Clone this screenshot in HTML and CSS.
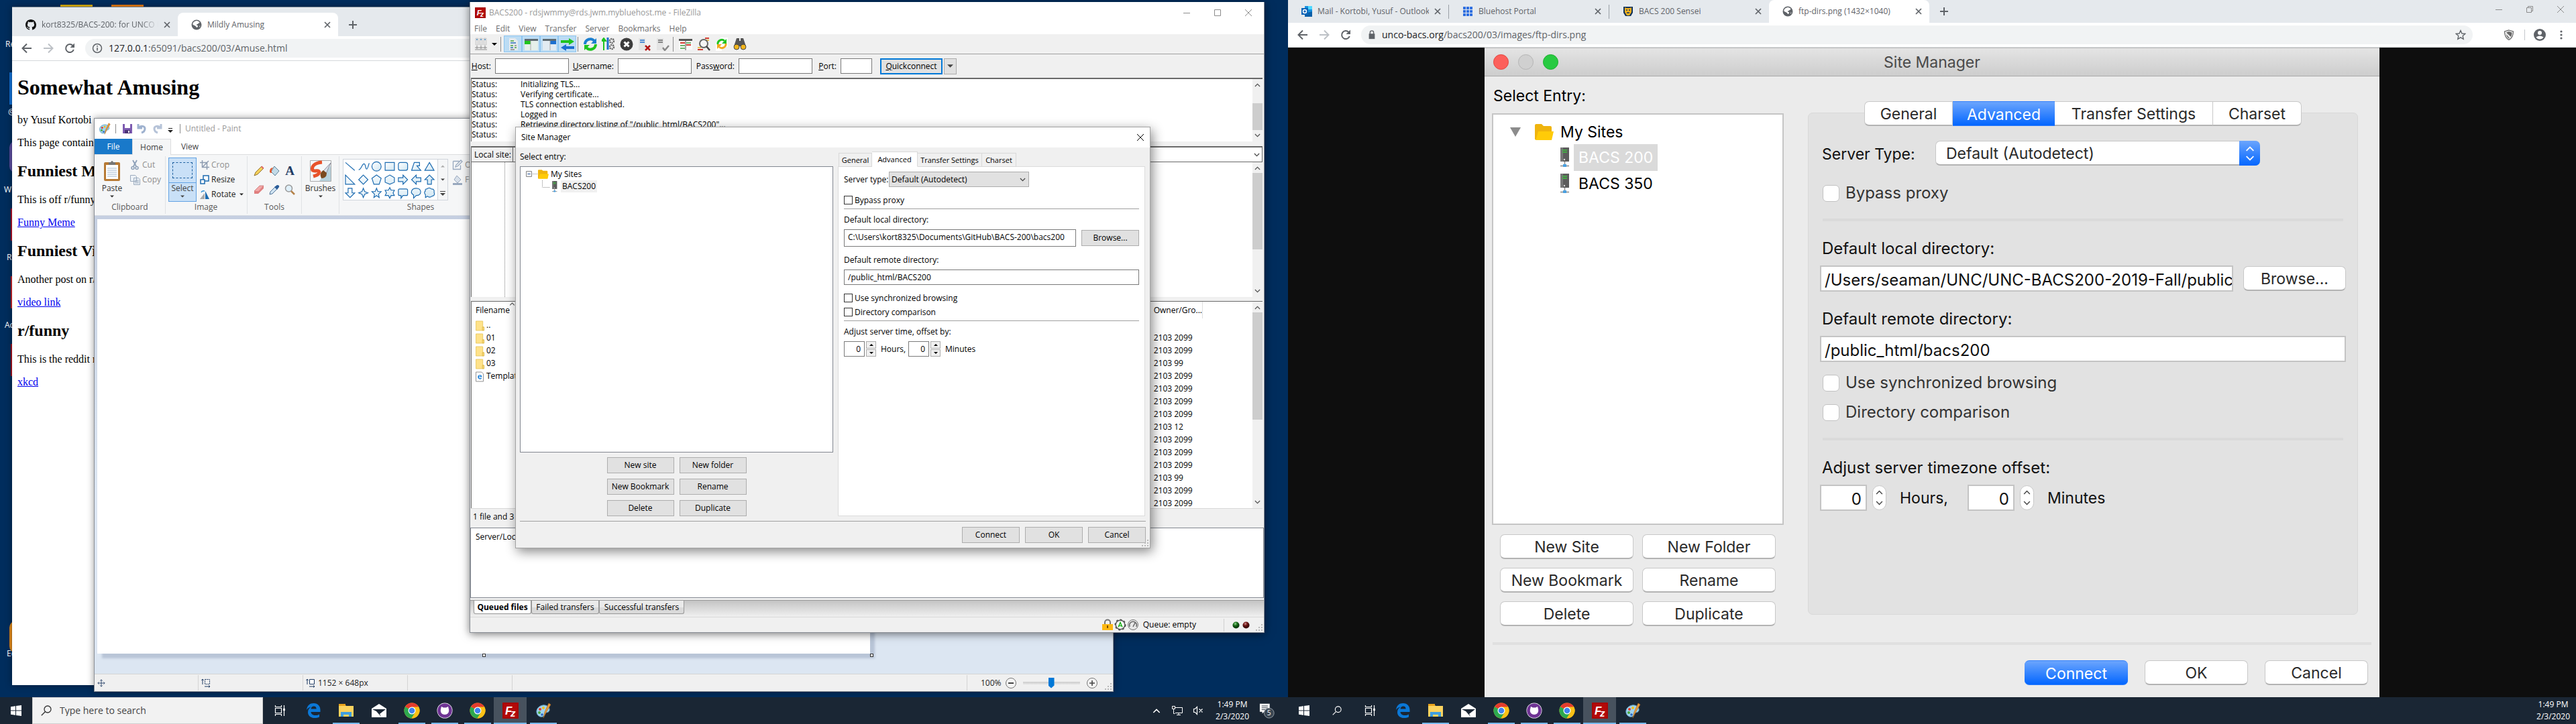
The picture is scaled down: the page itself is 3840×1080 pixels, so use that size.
FILE: index.html
```html
<!DOCTYPE html>
<html lang="en">
<head>
<meta charset="utf-8">
<title>Desktop</title>
<link rel="stylesheet" href="styles.css">
</head>
<body>
<svg class="sprite" aria-hidden="true">
  <defs>
    <linearGradient id="shapeFill" x1="0" y1="0" x2="1" y2="1"><stop offset="0" stop-color="#fff"/><stop offset="1" stop-color="#cfe6f2"/></linearGradient>
    <radialGradient id="ledGreen" cx=".4" cy=".3"><stop offset="0" stop-color="#9fd49a"/><stop offset=".5" stop-color="#1f7a1f"/><stop offset="1" stop-color="#0b3d0b"/></radialGradient>
    <radialGradient id="ledRed" cx=".4" cy=".3"><stop offset="0" stop-color="#c99"/><stop offset=".5" stop-color="#7a1a1a"/><stop offset="1" stop-color="#3d0b0b"/></radialGradient>
  </defs>
  <symbol id="close" viewBox="0 0 10 10"><path d="M1 1l8 8M9 1l-8 8" stroke="currentColor" stroke-width="1.7" fill="none"/></symbol>
  <symbol id="winclose" viewBox="0 0 12 12"><path d="M1 1l10 10M11 1L1 11" stroke="currentColor" fill="none"/></symbol>
  <symbol id="winmin" viewBox="0 0 12 12"><path d="M1 6.5h10" stroke="currentColor"/></symbol>
  <symbol id="winmax" viewBox="0 0 12 12"><path d="M1.5 1.5h9v9h-9z" stroke="currentColor" fill="none"/></symbol>
  <symbol id="winrestore" viewBox="0 0 12 12"><path d="M1.500 3.500h7v7h-7zM3.500 3.500v-2h7v7h-2" stroke="currentColor" fill="none"/></symbol>
  <symbol id="plus" viewBox="0 0 12 12"><path d="M6 0v12M0 6h12" stroke="currentColor" stroke-width="2"/></symbol>
  <symbol id="back" viewBox="0 0 16 16"><path d="M15 8H2M8 1.500L1.500 8 8 14.500" stroke="currentColor" stroke-width="2" fill="none"/></symbol>
  <symbol id="fwd" viewBox="0 0 16 16"><path d="M1 8h13M8 1.500L14.500 8 8 14.500" stroke="currentColor" stroke-width="2" fill="none"/></symbol>
  <symbol id="reload" viewBox="0 0 16 16"><path d="M13.800 10A6 6 0 1 1 12.500 4" stroke="currentColor" stroke-width="2" fill="none"/><path d="M15 .5V7H8.500z" fill="currentColor"/></symbol>
  <symbol id="info" viewBox="0 0 16 16"><circle cx="8" cy="8" r="6.500" fill="none" stroke="currentColor" stroke-width="1.500"/><path d="M8 7v4.500M8 4v1.800" stroke="currentColor" stroke-width="1.600"/></symbol>
  <symbol id="padlock" viewBox="0 0 12 16"><path d="M1 6h10v9H1z" fill="currentColor"/><path d="M3 7V4a3 3 0 0 1 6 0v3" fill="none" stroke="currentColor" stroke-width="1.600"/></symbol>
  <symbol id="globe" viewBox="0 0 16 16"><circle cx="8" cy="8" r="7.500" fill="#5f6368"/><path d="M7 2.200c2-.6 4.500.6 5.600 2.300-.5 1.500-2 .8-2.500 2-.3 1-2.200.5-2.300 1.600.1 1 1.700.6 2.200 1.500.3 1-.6 1.600-1 2.500-1.500-.4-1.700-2-3-2.700C4.500 8.700 2.800 8.500 2.300 7.200 2.400 4.500 5 2.500 7 2.200zM12.500 9.500l1.200.2-1.500 2.300z" fill="#fff"/></symbol>
  <symbol id="github" viewBox="0 0 16 16"><path fill="#111" d="M8 0C3.580 0 0 3.580 0 8c0 3.540 2.290 6.530 5.470 7.590.4.070.55-.17.55-.38 0-.19-.01-.82-.01-1.490-2.010.37-2.530-.49-2.690-.94-.09-.23-.48-.94-.82-1.130-.28-.15-.68-.52-.01-.53.63-.01 1.080.58 1.230.82.72 1.210 1.870.87 2.330.66.070-.52.28-.87.510-1.070-1.780-.2-3.640-.89-3.640-3.950 0-.87.310-1.590.82-2.150-.08-.2-.36-1.020.08-2.120 0 0 .67-.21 2.200.82a7.600 7.600 0 0 1 4 0c1.530-1.040 2.200-.82 2.200-.82.44 1.100.16 1.920.08 2.120.51.56.82 1.270.82 2.150 0 3.070-1.870 3.750-3.650 3.950.29.25.54.73.54 1.480 0 1.070-.01 1.930-.01 2.200 0 .21.15.46.55.38A8 8 0 0 0 16 8c0-4.420-3.580-8-8-8z"/></symbol>
  <symbol id="chev-d" viewBox="0 0 10 6"><path d="M1 .8l4 4 4-4" stroke="currentColor" stroke-width="1.300" fill="none"/></symbol>
  <symbol id="chev-u" viewBox="0 0 10 6"><path d="M1 5.200l4-4 4 4" stroke="currentColor" stroke-width="1.300" fill="none"/></symbol>
  <symbol id="tri-d" viewBox="0 0 8 4"><path d="M0 0h8L4 4z" fill="currentColor"/></symbol>
  <symbol id="tri-u" viewBox="0 0 8 4"><path d="M0 4h8L4 0z" fill="currentColor"/></symbol>
  <symbol id="palette" viewBox="0 0 24 24"><path d="M11 4C5 5 1 10 2 15c1 5 5 7 9 6 3-1 2-3 3-5 2-2 5 0 7-4 1-5-4-9-10-8z" fill="#9fd3ee" stroke="#5b9cbd"/><circle cx="7" cy="10" r="2" fill="#e23b2e"/><circle cx="12" cy="8" r="2" fill="#f2c21a"/><circle cx="6" cy="15" r="2" fill="#4aa83d"/><circle cx="10" cy="18" r="1.800" fill="#2b66c2"/><path d="M20 1l3 2-7 12-4 8 2-9z" fill="#e59a3c" stroke="#a9631b" stroke-width=".6"/></symbol>
  <symbol id="fz" viewBox="0 0 24 24"><path d="M0 0h24v24H0z" fill="#b30909"/><path d="M1 1h22v22H1z" fill="none" stroke="#7d0505" stroke-dasharray="1 1"/><text x="4" y="18" font-family="Liberation Sans" font-weight="700" font-style="italic" font-size="17" fill="#fff">F</text><text x="12" y="21" font-family="Liberation Sans" font-weight="700" font-style="italic" font-size="15" fill="#fff">z</text></symbol>
  <symbol id="chrome" viewBox="0 0 24 24"><circle cx="12" cy="12" r="11.500" fill="#fbc116"/><path d="M12 12L2 6.300A11.500 11.500 0 0 1 22 6.300z" fill="#e33b2e"/><path d="M12 12L2 6.300A11.500 11.500 0 0 0 11.500 23.500L17 14.800z" fill="#2da94f"/><path d="M12 6.500h10.100A11.500 11.500 0 0 1 11.500 23.500L17 14.800z" fill="#fbc116"/><circle cx="12" cy="12" r="5.500" fill="#fff"/><circle cx="12" cy="12" r="4.300" fill="#3f83f0"/></symbol>
  <symbol id="ghdesk" viewBox="0 0 24 24"><circle cx="12" cy="12" r="11.500" fill="#fff"/><circle cx="12" cy="12" r="10.800" fill="#6f3494"/><path d="M7 6l3 1.500h4L17 6l1 4c1 5-2 8-6 8s-7-3-6-8z" fill="#fff"/></symbol>
  <symbol id="edge" viewBox="0 0 24 24"><path fill="#0b78d7" d="M2 11C3 4 7 1 12.500 1 19 1 22.500 5.500 22.500 11v3H8.500c.3 3.500 3 5 6.500 5 2.300 0 4.500-.6 6-1.600v4.200c-2 1-4.300 1.500-7 1.500C7.500 23 4 19 4 14.500 4 10.500 6 7.800 9 6.500 6 7 3.500 8.500 2 11zm6.600-1.500h8c0-2.500-1.300-4-3.800-4-2.300 0-3.800 1.500-4.200 4z"/></symbol>
  <symbol id="explorer" viewBox="0 0 24 24"><path d="M1 3h9l2 2h11v16H1z" fill="#fbd35f"/><path d="M1 2h10v3H1z" fill="#e8a21b"/><path d="M4 14h16v7h-4v-3H8v3H4z" fill="#3f9fe0"/></symbol>
  <symbol id="mail" viewBox="0 0 24 24"><path d="M1 9l11-7 11 7v13H1z" fill="#fff"/><path d="M2 10h20l-9 7 2 4-7-8z" fill="#1a2634"/></symbol>
  <symbol id="taskview" viewBox="0 0 18 18"><path d="M2.500 5.500h9v7h-9zM2.500 1v2.500h9V1M2.500 17v-2.500h9V17" stroke="#fff" fill="none" stroke-width="1.200"/><path d="M15.500 1v16" stroke="#fff" stroke-width="1.200"/><path d="M14 6h3v3h-3z" fill="#fff"/></symbol>
  <symbol id="winlogo" viewBox="0 0 16 16"><path fill="#fff" d="M0 2.300L7 1.300v6.200H0zM8 1.100L16 0v7.500H8zM0 8.500h7v6.200L0 13.700zM8 8.500h8V16L8 14.900z"/></symbol>
  <symbol id="search" viewBox="0 0 16 16"><circle cx="10" cy="6" r="5" fill="none" stroke="currentColor" stroke-width="1.300"/><path d="M6.500 9.500L.8 15.300" stroke="currentColor" stroke-width="1.300"/></symbol>
  <symbol id="folder" viewBox="0 0 28 24"><path d="M0 2q0-2 2-2h8l3 3h10q2 0 2 2v18H0z" fill="#efb40e"/><path d="M5 11h23l-3 13H0q2 0 3-6z" fill="#ffcb08"/></symbol>
  <symbol id="server" viewBox="0 0 16 30"><path d="M1 0h13v21H1z" fill="#5c5c5c"/><path d="M1 0h4v21H1z" fill="#777"/><path d="M4 4h7M4 7h7" stroke="#3fbf3f" stroke-width="1.600"/><circle cx="7" cy="18" r="1.200" fill="#ddd"/><path d="M7.500 21v6M1 27.500h13" stroke="#888" stroke-width="1.500"/><path d="M5 25h5v4H5z" fill="#4aa0e0"/></symbol>
  <symbol id="minifolder" viewBox="0 0 14 16"><path d="M.5.5h11v15H.5z" fill="#ffe28a" stroke="#e8c860"/><path d="M11 10h2.500v5.500H11z" fill="#ffe28a" stroke="#d9b23a"/></symbol>
  <symbol id="htmlfile" viewBox="0 0 14 16"><path d="M.5.500h9l3 3v12H.5z" fill="#fff" stroke="#888"/><path d="M3.500 8q.5-3 3.500-3 3 0 3 3.500H5q.3 2 2.300 2 1.200 0 2.200-.5v1.300Q8 12 7 12 3.500 11.500 3.500 8zm1.700-.6h3Q8 6 6.800 6T5.200 7.400z" fill="#0b78d7"/></symbol>
  <symbol id="movex" viewBox="0 0 14 14"><path d="M7 1v12M1 7h12M5 3l2-2 2 2M5 11l2 2 2-2M3 5L1 7l2 2M11 5l2 2-2 2" stroke="#1f3b63" fill="none"/></symbol>
  <symbol id="selsize" viewBox="0 0 14 14"><path d="M5.500 1.500h7v7h-7z" stroke="#1f3b63" fill="none" stroke-dasharray="2 1"/><path d="M2 9V1M.5 3L2 1l1.500 2M5 12h8M11 10.500l2 1.500-2 1.500" stroke="#1f3b63" fill="none"/></symbol>
  <symbol id="imgsize" viewBox="0 0 14 14"><path d="M5.500 1.500h7v7h-7z" stroke="#1f3b63" fill="#fff"/><path d="M2 9V1M.5 3L2 1l1.500 2M5 12h8M11 10.500l2 1.500-2 1.500" stroke="#1f3b63" fill="none"/></symbol>
  <symbol id="grip" viewBox="0 0 10 10"><path d="M8 0h2v2H8zM4 4h2v2H4zM8 4h2v2H8zM0 8h2v2H0zM4 8h2v2H4zM8 8h2v2H8z" fill="#b8b8b8"/></symbol>
</svg>

<div class="screens">

<!-- Left monitor -->
<section class="monitor">
  <div class="desktop">
    <ul class="desk-labels">
      <li class="lab-a">Re</li><li class="lab-b">@</li><li class="lab-c">W</li><li class="lab-d">R</li><li class="lab-e">Ac</li><li class="lab-f">Ec</li>
    </ul>
    <i class="tile tile-gold"></i><i class="tile tile-orange"></i>
    <i class="tile tile-blue"></i><i class="tile tile-purple"></i><i class="tile tile-red1"></i><i class="tile tile-red2"></i><i class="tile tile-red3"></i><i class="tile tile-ball"></i>

    <!-- Browser -->
    <article class="window browser left-browser">
      <div class="tabstrip raised">
        <div class="tab"><svg class="i16"><use href="#github"/></svg><span class="tab-title fade">kort8325/BACS-200: for UNCO BACS</span><button class="tabx" aria-label="Close tab"><svg class="i10"><use href="#close"/></svg></button></div>
        <div class="tab active"><svg class="i16"><use href="#globe"/></svg><span class="tab-title">Mildly Amusing</span><button class="tabx" aria-label="Close tab"><svg class="i10"><use href="#close"/></svg></button></div>
        <button class="newtab" aria-label="New tab"><svg class="i12"><use href="#plus"/></svg></button>
      </div>
      <div class="navbar">
        <button aria-label="Back"><svg class="i16"><use href="#back"/></svg></button>
        <button class="off" aria-label="Forward"><svg class="i16"><use href="#fwd"/></svg></button>
        <button aria-label="Reload"><svg class="i16"><use href="#reload"/></svg></button>
        <div class="omni"><svg class="i16"><use href="#info"/></svg><span><b>127.0.0.1</b>:65091/bacs200/03/Amuse.html</span></div>
      </div>
      <main class="page">
        <h1>Somewhat Amusing</h1>
        <p>by Yusuf Kortobi</p>
        <p>This page contains</p>
        <h2>Funniest Meme</h2>
        <p>This is off r/funny</p>
        <p><a href="#meme">Funny Meme</a></p>
        <h2>Funniest Video</h2>
        <p>Another post on r/</p>
        <p><a href="#video">video link</a></p>
        <h2>r/funny</h2>
        <p>This is the reddit r</p>
        <p><a href="#xkcd">xkcd</a></p>
      </main>
    </article>

    <!-- Paint -->
    <article class="window paint">
      <header class="paint-title">
        <svg class="i18"><use href="#palette"/></svg><i class="vbar"></i>
        <svg class="i16 save" viewBox="0 0 16 16"><path d="M1 1h14v14H1z" fill="#7d5bb0"/><path d="M4 1h8v6H4z" fill="#fff"/><path d="M4 10h8v5H4z" fill="#4a3375"/><path d="M9 11h2v3H9z" fill="#fff"/></svg>
        <svg class="i16 undo" viewBox="0 0 16 16"><path d="M2 1v6h6M3 6c4-3 9-2 9 2 0 3-2 5-5 6" fill="none" stroke="#9fb2cf" stroke-width="3"/></svg>
        <svg class="i16" viewBox="0 0 16 16"><path d="M14 1v6H8M13 6C9 3 4 4 4 8c0 3 2 5 5 6" fill="none" stroke="#b6c3d8" stroke-width="3"/></svg>
        <svg class="qat" viewBox="0 0 8 8"><path d="M1 1.500h6" stroke="#222"/><path d="M0 4h8L4 8z" fill="#222"/></svg><i class="vbar"></i>
        <span>Untitled - Paint</span>
      </header>
      <nav class="paint-tabs"><button class="file">File</button><button class="home">Home</button><button class="view">View</button></nav>
      <div class="ribbon">
        <section class="group g-clip">
          <div class="group-body">
            <button class="big"><svg class="paste-ico" viewBox="0 0 26 32"><rect x="1" y="3" width="24" height="28" rx="2" fill="#b77a35"/><path d="M4 7h18v21H4z" fill="#fff"/><path d="M6 12h14M6 15h14M6 18h14M6 21h14M6 24h14" stroke="#9fb6cf"/><path d="M8 3h3q2-4 4 0h3v4H8z" fill="#777"/></svg><span>Paste</span><svg class="tri"><use href="#tri-d"/></svg></button>
            <div class="smalls two">
              <button class="dim"><svg class="i16" viewBox="0 0 16 16"><path d="M5 1l5 9M11 1L6 10" stroke="#8da0b8" stroke-width="1.800"/><circle cx="5" cy="12.500" r="2" fill="none" stroke="#8da0b8" stroke-width="1.500"/><circle cx="11" cy="12.500" r="2" fill="none" stroke="#8da0b8" stroke-width="1.500"/></svg>Cut</button>
              <button class="dim"><svg class="i16" viewBox="0 0 16 16"><path d="M1.500 1.500h7l2 2v7h-9zM6.500 5.500h7l2 2v8h-9z" fill="#eef3f8" stroke="#9aaabd"/><path d="M8 9h6M8 11h6M8 13h6" stroke="#9aaabd"/></svg>Copy</button>
            </div>
          </div>
          <h3>Clipboard</h3>
        </section>
        <section class="group g-image">
          <div class="group-body">
            <button class="select-btn"><span class="sel-top"><i></i></span><span class="sel-bot">Select<svg class="tri"><use href="#tri-d"/></svg></span></button>
            <div class="smalls">
              <button class="dim"><svg class="i14" viewBox="0 0 14 14"><path d="M3.500 0v10.500H14M0 3.500h10.500V14M4 10l9-9" fill="none" stroke="#8d9bb0" stroke-width="1.500"/></svg>Crop</button>
              <button><svg class="i14" viewBox="0 0 14 14"><path d="M5 1h8v8H5z" fill="#fff" stroke="#1c6bb0" stroke-width="1.500"/><path d="M1 7h6v6H1z" fill="#fff" stroke="#1c6bb0" stroke-width="1.500"/></svg>Resize</button>
              <button><svg class="i14" viewBox="0 0 14 14"><path d="M0 14h7V5z" fill="#aaa"/><path d="M8 14h6L8 2z" fill="#1c6bb0"/><path d="M2 4q1-3 5-2" fill="none" stroke="#2d8fd8" stroke-width="1.300"/></svg>Rotate<svg class="tri"><use href="#tri-d"/></svg></button>
            </div>
          </div>
          <h3>Image</h3>
        </section>
        <section class="group g-tools">
          <div class="tool-grid">
            <button aria-label="Pencil"><svg viewBox="0 0 16 16"><path d="M1 15l2-5L12 1l3 3-9 9z" fill="#f3cf5a" stroke="#7b5a17" stroke-width=".8"/><path d="M11 2l3 3 1.500-1.500-3-3z" fill="#e06a6a"/></svg></button>
            <button aria-label="Fill"><svg viewBox="0 0 16 16"><path d="M8 1l7 7-6 7-6-6z" fill="#c3dbe8" stroke="#5e8197"/><path d="M1 9q0-6 5-6-3 3-2 8-3 0-3-2z" fill="#e2572b"/></svg></button>
            <button class="letter" aria-label="Text">A</button>
            <button aria-label="Eraser"><svg viewBox="0 0 16 16"><path d="M1 10l8-8h6l-8 9z" fill="#f3a9a9" stroke="#c06a6a" stroke-width=".7"/><path d="M1 10h6v4H1zM7 11l8-9v4l-8 8z" fill="#e07f7f"/></svg></button>
            <button aria-label="Color picker"><svg viewBox="0 0 16 16"><path d="M1 15l1-4 7-7 3 3-7 7z" fill="#cfe3f2" stroke="#54779a"/><path d="M8 4l4 4 3-4q1-3-3-3z" fill="#2a5d99"/></svg></button>
            <button aria-label="Magnifier"><svg viewBox="0 0 16 16"><circle cx="6.500" cy="6" r="5" fill="#dff0fa" stroke="#999" stroke-width="1.500"/><path d="M10 10l5 5" stroke="#b5834a" stroke-width="2.500"/></svg></button>
          </div>
          <h3>Tools</h3>
        </section>
        <section class="group g-brush">
          <button class="big"><svg class="brush-ico" viewBox="0 0 32 32"><path d="M.5.5h31v31H.5z" fill="#f4f8fa" stroke="#aaa"/><path d="M31 31V8L14 31z" fill="#b7d2dc"/><path d="M18 3C6 4 2 10 4 15c4 3 9-2 10 3-1 4-5 5-9 6" fill="none" stroke="#e8532b" stroke-width="5"/><path d="M31 4L20 16l4 4z" fill="#d9e3ea" stroke="#889"/><path d="M20 15q-7 4-3 12 8 0 8-8z" fill="#7a4a1e"/></svg><span>Brushes</span><svg class="tri"><use href="#tri-d"/></svg></button>
        </section>
        <section class="group g-shapes">
          <div class="group-body">
            <svg class="gallery" viewBox="0 0 142 60" fill="url(#shapeFill)" stroke="#1c6bb0" stroke-width="1.200">
              <path d="M3 4l14 12" /><path d="M23 15c4 0 5-9 8-9s2 8 4 8 3-8 4-9" fill="none"/><circle cx="50" cy="10" r="7"/><path d="M63 4h14v12H63z"/><rect x="83" y="4" width="14" height="12" rx="3"/><path d="M103 16l4-12h8v5h-4l6 7z"/><path d="M130 4l7 12h-14z"/>
              <path d="M3 23v14h14zM30 23l7 7-7 7-7-7zM50 23l7 5-3 9h-8l-3-9zM70 23l7 4v7l-7 3-7-3v-7zM83 27h7v-4l7 7-7 7v-4h-7zM117 27h-7v-4l-7 7 7 7v-4h7zM127 37v-7h-4l7-7 7 7h-4v7z"/>
              <path d="M7 43v7H3l7 7 7-7h-4v-7zM30 43l2 5 5 2-5 2-2 5-2-5-5-2 5-2zM50 43l2 5h5l-4 4 1 5-4-3-4 3 1-5-4-4h5zM70 42l2 4h5l-2 4 2 4h-5l-2 4-2-4h-5l2-4-2-4h5zM85 44h10q2 0 2 2v6q0 2-2 2h-5l-3 4v-4h-2q-2 0-2-2v-6q0-2 2-2zM110 43c9 0 9 11 0 11l-4 4v-5c-6-3-3-10 4-10zM126 44q4-3 7 0 5 0 4 5 2 5-3 6-4 3-7 0l-3 2v-4q-3-4 0-6-1-3 2-3z"/>
            </svg>
            <div class="gal-scroll"><span class="dim"><svg class="tri"><use href="#tri-u"/></svg></span><span><svg class="tri"><use href="#tri-d"/></svg></span><span class="more"><svg class="tri"><use href="#tri-d"/></svg></span></div>
            <div class="smalls two">
              <button class="dim"><svg class="i16" viewBox="0 0 16 16"><path d="M1.500 2.500h9M1.500 2.500v12h11v-6M5 11l1-3 7-7 2 2-7 7z" fill="none" stroke="#98a8be" stroke-width="1.300"/></svg>Outline</button>
              <button class="dim"><svg class="i16" viewBox="0 0 16 16"><path d="M7 2l6 6-5 5-5-5z" fill="#d8e0ea" stroke="#98a8be"/><path d="M1 13h14v3H1z" fill="#98a8be"/></svg>Fill</button>
            </div>
          </div>
          <h3>Shapes</h3>
        </section>
      </div>
      <div class="workspace"><div class="canvas"><i class="handle hb"></i><i class="handle hc"></i></div></div>
      <footer class="paint-status">
        <span><svg class="i12"><use href="#movex"/></svg></span><span><svg class="i14"><use href="#selsize"/></svg></span><span><svg class="i14"><use href="#imgsize"/></svg>1152 × 648px</span><span></span><span class="grow"></span>
        <div class="zoomer"><label for="pzoom">100%</label>
          <svg class="i18" viewBox="0 0 18 18"><circle cx="9" cy="9" r="7.500" fill="#f4f4f4" stroke="#777"/><path d="M5 9h8" stroke="#444" stroke-width="2"/></svg>
          <input id="pzoom" type="range" value="50">
          <svg class="i18" viewBox="0 0 18 18"><circle cx="9" cy="9" r="7.500" fill="#f4f4f4" stroke="#777"/><path d="M5 9h8M9 5v8" stroke="#444" stroke-width="1.600"/></svg></div>
        <svg class="grip"><use href="#grip"/></svg>
      </footer>
    </article>

    <!-- FileZilla -->
    <article class="window filezilla">
      <header class="fz-title"><svg class="i16"><use href="#fz"/></svg><span>BACS200 - rdsjwmmy@rds.jwm.mybluehost.me - FileZilla</span>
        <div class="winbtns"><button aria-label="Minimize"><svg class="i12"><use href="#winmin"/></svg></button><button aria-label="Maximize"><svg class="i12"><use href="#winmax"/></svg></button><button aria-label="Close"><svg class="i12"><use href="#winclose"/></svg></button></div></header>
      <nav class="fz-menu"><span>File</span><span>Edit</span><span>View</span><span>Transfer</span><span>Server</span><span>Bookmarks</span><span>Help</span></nav>
      <div class="fz-tools">
        <button aria-label="Site Manager"><svg viewBox="0 0 20 20"><path d="M2 1h4v10H2zM8 1h4v10H8zM14 1h4v10h-4z" fill="#e3e3e3" stroke="#bbb" stroke-width=".6"/><path d="M3 3h2M9 3h2M15 3h2" stroke="#4a90c8" stroke-width="1.500"/><path d="M4 12v5M10 12v5M16 12v5M1 18h18M1 15h18" stroke="#888"/></svg></button>
        <button class="narrow" aria-label="Sites"><svg class="tri"><use href="#tri-d"/></svg></button><i class="vbar"></i>
        <button class="on" aria-label="Message log"><svg viewBox="0 0 20 20"><path d="M4 1h9l4 4v14H4z" fill="#e6eaec"/><path d="M6 5h5M6 12h4M12 15h3" stroke="#4aa83d" stroke-width="1.500"/><path d="M6 8h8M6 15h4" stroke="#2b6fb5" stroke-width="1.500"/><path d="M12 12h3M6 18h6" stroke="#888" stroke-width="1.500"/></svg></button>
        <button class="on" aria-label="Local tree"><svg viewBox="0 0 20 20"><path d="M0 3h20v16H0z" fill="#e6f0ea"/><path d="M0 2h20v3H0z" fill="#5e6a70"/><path d="M0 5h9v5H0z" fill="#1fc41f"/><path d="M9 5v14" stroke="#aaa"/></svg></button>
        <button class="on" aria-label="Remote tree"><svg viewBox="0 0 20 20"><path d="M0 3h20v16H0z" fill="#e2ebf2"/><path d="M0 2h20v3H0z" fill="#5e6a70"/><path d="M11 5h9v5h-9z" fill="#1c6fd0"/><path d="M11 5v14" stroke="#aaa"/></svg></button>
        <button class="on" aria-label="Transfer queue"><svg viewBox="0 0 20 20"><path d="M0 4h12V1l8 5-8 5V8H0z" fill="#1fc41f"/><path d="M20 13H8v-3l-8 5 8 5v-3h12z" fill="#1c6fd0"/></svg></button><i class="vbar"></i>
        <button aria-label="Refresh"><svg viewBox="0 0 20 20"><path d="M2 10a8 8 0 0 1 14-5" fill="none" stroke="#1c7fd0" stroke-width="4"/><path d="M19 1v8h-8z" fill="#1c7fd0"/><path d="M18 10a8 8 0 0 1-14 5" fill="none" stroke="#1fc41f" stroke-width="4"/><path d="M1 19v-8h8z" fill="#1fc41f"/></svg></button>
        <button aria-label="Filter"><svg viewBox="0 0 20 20"><path d="M3 4v15M0 5l3-4 3 4z" stroke="#1fc41f" fill="#1fc41f" stroke-width="2"/><path d="M9 0v18" stroke="#1c6fd0" stroke-width="3"/><circle cx="15" cy="5" r="3" fill="none" stroke="#666" stroke-width="2.500" stroke-dasharray="2 1"/><circle cx="15" cy="14" r="3" fill="none" stroke="#666" stroke-width="2.500" stroke-dasharray="2 1"/></svg></button>
        <button aria-label="Cancel"><svg viewBox="0 0 20 20"><circle cx="10" cy="10" r="9.500" fill="#3c3c3c"/><path d="M6.500 6.500l7 7M13.500 6.500l-7 7" stroke="#fff" stroke-width="3"/></svg></button>
        <button aria-label="Disconnect"><svg viewBox="0 0 20 20"><path d="M1 1h10v18H1z" fill="#e4e4e4"/><path d="M3 4h7M3 7h7" stroke="#1c6fd0" stroke-width="1.500"/><path d="M11 12l7 7M18 12l-7 7" stroke="#b31414" stroke-width="2.500"/></svg></button>
        <button aria-label="Reconnect"><svg viewBox="0 0 20 20"><path d="M1 1h10v18H1z" fill="#e4e4e4"/><path d="M3 4h7M3 7h7" stroke="#666" stroke-width="1.500"/><path d="M10 15l3 4 6-7" fill="none" stroke="#888" stroke-width="2.500"/></svg></button><i class="vbar"></i>
        <button aria-label="Compare"><svg viewBox="0 0 20 20"><path d="M0 2h20v16H0z" fill="#fafafa"/><path d="M0 3.500h20" stroke="#555" stroke-width="3"/><path d="M2 8h7M11 11h7" stroke="#d43b2e" stroke-width="2"/><path d="M2 12h7M11 8h7M2 16h7" stroke="#3f9f3f" stroke-width="1.500"/><path d="M10 3v16" stroke="#555"/></svg></button>
        <button aria-label="Search"><svg viewBox="0 0 20 20"><path d="M12 1h6M1 18h8" stroke="#d43b2e" stroke-width="2"/><path d="M13 4h5M1 15h5" stroke="#e8b21b" stroke-width="1.500"/><circle cx="10" cy="9" r="6" fill="#f4f4f4" stroke="#666" stroke-width="2"/><path d="M14 13l5 6" stroke="#444" stroke-width="2.500"/></svg></button>
        <button aria-label="Synchronize"><svg viewBox="0 0 20 20"><path d="M8 0h11v14H8zM1 8h9v12H1z" fill="#fff"/><path d="M4 10a6 6 0 0 1 10-5" fill="none" stroke="#1fc41f" stroke-width="3"/><path d="M17 2v7h-7z" fill="#1fc41f"/><path d="M16 9a6 6 0 0 1-10 5" fill="none" stroke="#f0a81b" stroke-width="3"/><path d="M3 17v-7h7z" fill="#f0a81b"/></svg></button>
        <button aria-label="Find"><svg viewBox="0 0 20 20"><path d="M5 1h4v4h2V1h4l4 12H1z" fill="#555"/><circle cx="5" cy="14" r="4" fill="#f3b51b" stroke="#444"/><circle cx="15" cy="14" r="4" fill="#f3b51b" stroke="#444"/></svg></button>
      </div>
      <form class="quick">
        <label for="qh"><u>H</u>ost:</label><input id="qh" type="text">
        <label for="qu"><u>U</u>sername:</label><input id="qu" type="text">
        <label for="qp">Pass<u>w</u>ord:</label><input id="qp" type="password">
        <label for="qo"><u>P</u>ort:</label><input id="qo" type="text">
        <button type="button" class="go"><u>Q</u>uickconnect</button><button type="button" class="drop" aria-label="History"><svg class="tri"><use href="#tri-d"/></svg></button>
      </form>
      <div class="log">
        <table><tbody><tr><th>Status:</th><td>Initializing TLS...</td></tr><tr><th>Status:</th><td>Verifying certificate...</td></tr><tr><th>Status:</th><td>TLS connection established.</td></tr><tr><th>Status:</th><td>Logged in</td></tr><tr><th>Status:</th><td>Retrieving directory listing of "/public_html/BACS200"...</td></tr><tr><th>Status:</th><td></td></tr></tbody></table>
        <div class="sb"><svg><use href="#chev-u"/></svg><div class="track t-log"><i></i></div><svg><use href="#chev-d"/></svg></div>
      </div>
      <div class="panes trees">
        <section><div class="sitebar"><label for="lsite">Local site:</label><input id="lsite" type="text"></div><div class="treebody"><i class="dots"></i></div></section>
        <section><div class="sitebar combo"><input type="text" aria-label="Remote site"><svg class="cdrop"><use href="#chev-d"/></svg></div><div class="treebody"><div class="sb end"><svg><use href="#chev-u"/></svg><div class="track t-tree"><i></i></div><svg><use href="#chev-d"/></svg></div></div></section>
      </div>
      <div class="panes lists">
        <section>
          <div class="listbody"><table class="files"><thead><tr><th>Filename</th></tr></thead><tbody>
          <tr><td><svg><use href="#minifolder"/></svg>..</td></tr><tr><td><svg><use href="#minifolder"/></svg>01</td></tr><tr><td><svg><use href="#minifolder"/></svg>02</td></tr><tr><td><svg><use href="#minifolder"/></svg>03</td></tr><tr><td><svg><use href="#htmlfile"/></svg>Template</td></tr></tbody></table>
          <svg class="sortcaret"><use href="#chev-u"/></svg></div>
          <p class="liststat">1 file and 3 directories</p>
        </section>
        <section>
          <div class="listbody right"><table class="files owner"><thead><tr><th>Owner/Gro...</th></tr></thead><tbody>
          <tr><td></td></tr><tr><td>2103 2099</td></tr><tr><td>2103 2099</td></tr><tr><td>2103 99</td></tr><tr><td>2103 2099</td></tr><tr><td>2103 2099</td></tr><tr><td>2103 2099</td></tr><tr><td>2103 2099</td></tr><tr><td>2103 12</td></tr><tr><td>2103 2099</td></tr><tr><td>2103 2099</td></tr><tr><td>2103 2099</td></tr><tr><td>2103 99</td></tr><tr><td>2103 2099</td></tr><tr><td>2103 2099</td></tr></tbody></table>
          <div class="sb"><svg><use href="#chev-u"/></svg><div class="track t-list"><i></i></div><svg><use href="#chev-d"/></svg></div></div>
          <p class="liststat"></p>
        </section>
      </div>
      <div class="queue">Server/Local file</div>
      <nav class="qtabs"><button class="cur">Queued files</button><button>Failed transfers</button><button>Successful transfers</button></nav>
      <footer class="fz-status">
        <svg class="i18" viewBox="0 0 18 18"><path d="M5 9V5.500a4 4 0 0 1 8 0V9" fill="none" stroke="#777" stroke-width="2"/><path d="M1 8h16v9H1z" fill="#fdb813"/><path d="M9 10v4" stroke="#7a4d00" stroke-width="2"/></svg>
        <svg class="i18" viewBox="0 0 18 18"><circle cx="9" cy="9" r="6.800" fill="#fff" stroke="#555" stroke-width="1.500"/><circle cx="9" cy="9" r="7.800" fill="none" stroke="#555" stroke-width="1.500" stroke-dasharray="3 3"/><path d="M6 12.500l3-7 3 7M7 10.500h4" stroke="#1fae1f" stroke-width="1.500" fill="none"/></svg>
        <svg class="i18" viewBox="0 0 18 18"><circle cx="9" cy="9" r="7.500" fill="#e8e8e8" stroke="#777"/><path d="M4 12a5.500 5.500 0 1 1 10 0M9 12l3-6" fill="none" stroke="#666" stroke-width="1.500"/></svg>
        <span>Queue: empty</span><i class="vbar"></i>
        <svg class="led" viewBox="0 0 12 12"><circle cx="6" cy="6" r="5.500" fill="url(#ledGreen)"/></svg><svg class="led" viewBox="0 0 12 12"><circle cx="6" cy="6" r="5.500" fill="url(#ledRed)"/></svg>
        <svg class="grip"><use href="#grip"/></svg>
      </footer>
    </article>

    <!-- Site Manager dialog -->
    <article class="window dialog">
      <header class="dlg-title"><span>Site Manager</span><button aria-label="Close"><svg class="i12"><use href="#winclose"/></svg></button></header>
      <div class="dlg-body">
        <section class="dlg-left">
          <h2>Select entry:</h2>
          <ul class="tree"><li><svg class="expander" viewBox="0 0 18 10"><path d="M.5.500h8v8h-8z" fill="#f4f4f4" stroke="#888"/><path d="M2.500 4.500h4" stroke="#2b5ea8"/><path d="M10 4.500h8" stroke="#888" stroke-dasharray="1 1"/></svg><svg class="fold"><use href="#folder"/></svg>My Sites</li>
          <li class="child"><svg class="branch" viewBox="0 0 12 18"><path d="M.5 0v10.500H12" fill="none" stroke="#888" stroke-dasharray="1 1"/></svg><svg class="srv"><use href="#server"/></svg><span>BACS200</span></li></ul>
          <div class="btngrid"><button>New site</button><button>New folder</button><button>New Bookmark</button><button>Rename</button><button>Delete</button><button>Duplicate</button></div>
        </section>
        <section class="dlg-right">
          <nav class="dlg-tabs"><button class="t1">General</button><button class="t2 cur">Advanced</button><button class="t3">Transfer Settings</button><button class="t4">Charset</button></nav>
          <form class="dlg-panel">
            <div class="row"><label for="st">Server type:</label><div class="selwrap"><select id="st"><option>Default (Autodetect)</option></select><svg><use href="#chev-d"/></svg></div></div>
            <label class="check first"><input type="checkbox">Bypass proxy</label>
            <hr>
            <label class="lbl" for="ld">Default local directory:</label>
            <div class="row dir"><input id="ld" type="text" value="C:\Users\kort8325\Documents\GitHub\BACS-200\bacs200"><button type="button">Browse...</button></div>
            <label class="lbl second" for="rd">Default remote directory:</label>
            <input id="rd" class="full" type="text" value="/public_html/BACS200">
            <label class="check sync"><input type="checkbox">Use synchronized browsing</label>
            <label class="check cmp"><input type="checkbox">Directory comparison</label>
            <hr>
            <span class="lbl">Adjust server time, offset by:</span>
            <div class="row spin"><input id="hh" type="text" value="0"><span class="updown"><i><svg><use href="#tri-u"/></svg></i><i><svg><use href="#tri-d"/></svg></i></span><label for="hh">Hours,</label><input id="mm" type="text" value="0"><span class="updown"><i><svg><use href="#tri-u"/></svg></i><i><svg><use href="#tri-d"/></svg></i></span><label for="mm">Minutes</label></div>
          </form>
        </section>
      </div>
      <footer class="dlg-foot"><button>Connect</button><button>OK</button><button>Cancel</button></footer>
      <svg class="grip"><use href="#grip"/></svg>
    </article>
  </div>

  <footer class="taskbar">
    <button class="start" aria-label="Start"><svg class="i16"><use href="#winlogo"/></svg></button>
    <label class="searchbox"><svg class="i16"><use href="#search"/></svg><input type="text" placeholder="Type here to search" aria-label="Search"></label>
    <button class="app" aria-label="Task view"><svg class="i18"><use href="#taskview"/></svg></button>
    <button class="app" aria-label="Edge"><svg><use href="#edge"/></svg></button>
    <button class="app run" aria-label="File Explorer"><svg><use href="#explorer"/></svg></button>
    <button class="app" aria-label="Mail"><svg><use href="#mail"/></svg></button>
    <button class="app run" aria-label="Chrome"><svg><use href="#chrome"/></svg></button>
    <button class="app run" aria-label="GitHub Desktop"><svg><use href="#ghdesk"/></svg></button>
    <button class="app run" aria-label="Chrome"><svg><use href="#chrome"/></svg></button>
    <button class="app run cur" aria-label="FileZilla"><svg><use href="#fz"/></svg></button>
    <button class="app run" aria-label="Paint"><svg><use href="#palette"/></svg></button>
    <div class="tray">
      <svg class="tchev"><use href="#chev-u"/></svg>
      <svg class="i16" viewBox="0 0 16 16"><path d="M5 3.500h10.500v8H5M10 11.500v3M7 14.500h6M.5 1.500h4v4h-4zM2.500 5.500v7h2" fill="none" stroke="#fff"/></svg>
      <svg class="i16" viewBox="0 0 16 16"><path d="M1.500 5.500h2l3-3v11l-3-3h-2zM9.500 5.500l5 5M14.500 5.500l-5 5" fill="none" stroke="#fff" stroke-width="1.200"/></svg>
      <time>1:49 PM<br>2/3/2020</time>
      <svg class="notif" viewBox="0 0 26 26"><path d="M1 2h16v13H8l-3 3v-3H1z" fill="#fff"/><path d="M4 5.500h10M4 8.500h10M4 11.500h6" stroke="#1a2634"/><circle cx="16" cy="17" r="8" fill="#3a4652" stroke="#9aa3ab"/><text x="16" y="21" text-anchor="middle" font-family="Open Sans" font-size="11" fill="#fff">5</text></svg>
    </div>
  </footer>
</section>

<!-- Right monitor -->
<section class="monitor">
  <article class="browser maximized">
    <div class="tabstrip">
      <div class="tab"><svg class="i16" viewBox="0 0 16 16"><path d="M5 0h11v16H5z" fill="#1490df"/><path d="M10 0h6v5h-6z" fill="#50d9ff"/><path d="M5 11l11-3v8H5z" fill="#0a5fa8"/><path d="M0 3h10v10H0z" fill="#0a64b8"/><circle cx="5" cy="8" r="2.500" fill="none" stroke="#fff" stroke-width="1.500"/></svg><span class="tab-title">Mail - Kortobi, Yusuf - Outlook</span><button class="tabx" aria-label="Close tab"><svg class="i10"><use href="#close"/></svg></button></div>
      <div class="tab line"><svg class="i16" viewBox="0 0 16 16"><path d="M1 1h4v4H1zM6 1h4v4H6zM11 1h4v4h-4zM1 6h4v4H1zM6 6h4v4H6zM11 6h4v4h-4zM1 11h4v4H1zM6 11h4v4H6zM11 11h4v4h-4z" fill="#2f6fe0"/></svg><span class="tab-title">Bluehost Portal</span><button class="tabx" aria-label="Close tab"><svg class="i10"><use href="#close"/></svg></button></div>
      <div class="tab line"><svg class="i16" viewBox="0 0 16 16"><path d="M1 1h14v9l-3 5H4l-3-5z" fill="#12335c"/><path d="M3 2l2 1h6l2-1v7l-3 5H6L3 9z" fill="#f2b01e"/><path d="M5 6h2M9 6h2M6 10h4" stroke="#12335c" stroke-width="1.500"/></svg><span class="tab-title">BACS 200 Sensei</span><button class="tabx" aria-label="Close tab"><svg class="i10"><use href="#close"/></svg></button></div>
      <div class="tab active"><svg class="i16"><use href="#globe"/></svg><span class="tab-title">ftp-dirs.png (1432×1040)</span><button class="tabx" aria-label="Close tab"><svg class="i10"><use href="#close"/></svg></button></div>
      <button class="newtab" aria-label="New tab"><svg class="i12"><use href="#plus"/></svg></button>
      <div class="winbtns"><button aria-label="Minimize"><svg class="i12"><use href="#winmin"/></svg></button><button aria-label="Restore"><svg class="i12"><use href="#winrestore"/></svg></button><button aria-label="Close"><svg class="i12"><use href="#winclose"/></svg></button></div>
    </div>
    <div class="navbar">
      <button aria-label="Back"><svg class="i16"><use href="#back"/></svg></button>
      <button class="off" aria-label="Forward"><svg class="i16"><use href="#fwd"/></svg></button>
      <button aria-label="Reload"><svg class="i16"><use href="#reload"/></svg></button>
      <div class="omni"><svg class="lockico"><use href="#padlock"/></svg><span><b>unco-bacs.org</b>/bacs200/03/images/ftp-dirs.png</span>
        <svg class="i16 star" viewBox="0 0 16 16"><path d="M8 1.500l2 4.500 4.800.4-3.600 3.200 1 4.800L8 11.900l-4.200 2.500 1-4.800L1.200 6.400 6 6z" fill="none" stroke="#5f6368" stroke-width="1.400"/></svg></div>
      <svg class="i16 shield" viewBox="0 0 16 16"><path d="M8 1l6.500 2C14.500 9 12.500 13 8 15.500 3.500 13 1.500 9 1.500 3z" fill="#eee" stroke="#666" stroke-width="1.200"/><path d="M8 3l4.500 1.500Q12.500 9 11 11L4 4.500zM4 7l5 6-1 .5Q4.500 11 4 7z" fill="#666"/></svg>
      <i class="vbar"></i>
      <svg class="i18 avatar" viewBox="0 0 18 18"><circle cx="9" cy="9" r="9" fill="#5f6368"/><circle cx="9" cy="6" r="3" fill="#fff"/><path d="M3.500 12.500q5.500-4 11 0Q12.500 15.500 9 15.500t-5.500-3z" fill="#fff"/></svg>
      <svg class="i16" viewBox="0 0 16 16"><circle cx="8" cy="3" r="1.600" fill="#5f6368"/><circle cx="8" cy="8" r="1.600" fill="#5f6368"/><circle cx="8" cy="13" r="1.600" fill="#5f6368"/></svg>
    </div>
    <div class="viewer">
      <div class="mac">
        <header class="mac-title"><span class="lights"><i class="red"></i><i class="grey"></i><i class="green"></i></span><h2>Site Manager</h2></header>
        <div class="mac-body">
          <section class="mac-left">
            <h3>Select Entry:</h3>
            <ul class="mac-tree"><li class="root"><svg class="mtri" viewBox="0 0 16 14"><path d="M0 0h16L8 14z" fill="#8c8c8c"/></svg><svg class="mfold"><use href="#folder"/></svg>My Sites</li>
            <li><svg class="msrv"><use href="#server"/></svg><span class="cur">BACS 200</span></li><li><svg class="msrv"><use href="#server"/></svg><span>BACS 350</span></li></ul>
            <div class="mac-grid"><button>New Site</button><button>New Folder</button><button>New Bookmark</button><button>Rename</button><button>Delete</button><button>Duplicate</button></div>
          </section>
          <section class="mac-right">
            <nav class="mac-tabs"><button class="m1">General</button><button class="m2 cur">Advanced</button><button class="m3">Transfer Settings</button><button class="m4">Charset</button></nav>
            <form class="mac-panel">
              <div class="mrow type"><label for="mst">Server Type:</label><div class="msel"><select id="mst"><option>Default (Autodetect)</option></select><span class="knob"><svg><use href="#chev-u"/></svg><svg><use href="#chev-d"/></svg></span></div></div>
              <label class="mcheck c1"><input type="checkbox">Bypass proxy</label>
              <hr>
              <label class="mlbl" for="mld">Default local directory:</label>
              <div class="mrow mdir"><input id="mld" type="text" value="/Users/seaman/UNC/UNC-BACS200-2019-Fall/public_html"><button type="button">Browse...</button></div>
              <label class="mlbl" for="mrd">Default remote directory:</label>
              <input id="mrd" class="mfull" type="text" value="/public_html/bacs200">
              <label class="mcheck c2"><input type="checkbox">Use synchronized browsing</label>
              <label class="mcheck c3"><input type="checkbox">Directory comparison</label>
              <hr>
              <span class="mlbl">Adjust server timezone offset:</span>
              <div class="mrow mspin"><input id="mh" type="text" value="0"><span class="stepper"><svg><use href="#chev-u"/></svg><svg><use href="#chev-d"/></svg></span><label for="mh">Hours,</label><input id="mm2" type="text" value="0"><span class="stepper"><svg><use href="#chev-u"/></svg><svg><use href="#chev-d"/></svg></span><label for="mm2">Minutes</label></div>
            </form>
          </section>
        </div>
        <footer class="mac-foot"><button class="primary">Connect</button><button>OK</button><button>Cancel</button></footer>
      </div>
    </div>
  </article>
  <footer class="taskbar">
    <button class="start" aria-label="Start"><svg class="i16"><use href="#winlogo"/></svg></button>
    <button class="app" aria-label="Search"><svg class="i16"><use href="#search"/></svg></button>
    <button class="app" aria-label="Task view"><svg class="i18"><use href="#taskview"/></svg></button>
    <button class="app" aria-label="Edge"><svg><use href="#edge"/></svg></button>
    <button class="app run" aria-label="File Explorer"><svg><use href="#explorer"/></svg></button>
    <button class="app" aria-label="Mail"><svg><use href="#mail"/></svg></button>
    <button class="app run" aria-label="Chrome"><svg><use href="#chrome"/></svg></button>
    <button class="app run" aria-label="GitHub Desktop"><svg><use href="#ghdesk"/></svg></button>
    <button class="app run" aria-label="Chrome"><svg><use href="#chrome"/></svg></button>
    <button class="app run cur" aria-label="FileZilla"><svg><use href="#fz"/></svg></button>
    <button class="app run" aria-label="Paint"><svg><use href="#palette"/></svg></button>
    <div class="tray slim"><time>1:49 PM<br>2/3/2020</time></div>
  </footer>
</section>
</div>
</body>
</html>
```
FILE: styles.css
```css
* { box-sizing: border-box; }
html, body { margin: 0; height: 100%; }
body { font: 12px/16px "Open Sans", "Noto Sans", sans-serif; color: #000; overflow: hidden; }
h1, h2, h3, p, ul { margin: 0; padding: 0; font-size: inherit; font-weight: 400; }
ul { list-style: none; }
button, input, select { font: inherit; color: inherit; margin: 0; padding: 0; border: 0; border-radius: 0; background: none; outline: 0; }
button { display: flex; align-items: center; justify-content: center; white-space: nowrap; }
table { border-collapse: collapse; }
th, td { padding: 0; text-align: left; font-weight: 400; white-space: nowrap; }
svg { display: block; flex: none; }
label, span { white-space: nowrap; }
.sprite { position: absolute; width: 0; height: 0; }
.i10 { width: 10px; height: 10px; }
.i12 { width: 12px; height: 12px; }
.i14 { width: 14px; height: 14px; }
.i16 { width: 16px; height: 16px; }
.i18 { width: 18px; height: 18px; }
.tri { width: 6px; height: 4px; }
.vbar { width: 1px; background: #8c8c8c; }

.screens { display: grid; grid-template-columns: 1fr 1fr; height: 100%; }
.monitor { display: flex; flex-direction: column; min-width: 0; min-height: 0; }
.desktop { position: relative; flex: 1; background: #002d5d; overflow: hidden; }
.window { position: absolute; display: flex; flex-direction: column; overflow: hidden; }

/* desktop items that peek out beside the windows */
.desk-labels { color: #fff; }
.desk-labels li, .tile { position: absolute; }
.lab-a { left: 8px; top: 58px; }
.lab-b { left: 12px; top: 159px; }
.lab-c { left: 6px; top: 275px; }
.lab-d { left: 10px; top: 376px; }
.lab-e { left: 7px; top: 477px; }
.lab-f { left: 10px; top: 967px; }
.tile { left: 14px; width: 20px; height: 48px; }
.tile-gold { left: 90px; top: 7px; width: 48px; background: #e6b70c; }
.tile-orange { left: 166px; top: 7px; width: 48px; background: #f07f13; }
.tile-blue { top: 108px; background: #1271d6; }
.tile-purple { top: 210px; background: #5b4da0; border-radius: 20px; }
.tile-red1 { left: 16px; top: 311px; background: #b3122a; }
.tile-red2 { left: 16px; top: 412px; background: #c8242c; }
.tile-red3 { left: 16px; top: 513px; background: #a5121f; }
.tile-ball { top: 926px; background: #e08a1c; border-radius: 20px; }

/* browser */
.browser { background: #fff; }
.left-browser { left: 18px; top: 10px; right: 700px; bottom: 18px; border-top: 1px solid #7d8a96; box-shadow: 0 0 10px #0006; }
.maximized { flex: 1; display: flex; flex-direction: column; min-height: 0; }
.tabstrip { display: flex; height: 34px; background: #e5e9ed; color: #5f6368; flex: none; }
.tabstrip.raised { height: 43px; padding-top: 8px; }
.tab { width: 239px; padding: 0 11px 0 20px; display: flex; align-items: center; gap: 8px; position: relative; }
.tab.active { background: #fff; border-radius: 8px 8px 0 0; }
.raised .tab:first-child { width: 247px; }
.tab-title { flex: 1; min-width: 0; overflow: hidden; }
.fade { -webkit-mask-image: linear-gradient(90deg, #000 85%, transparent); mask-image: linear-gradient(90deg, #000 85%, transparent); }
.tab.line { border-left: 1px solid #9aa0a6; border-image: linear-gradient(transparent 22%, #9aa0a6 22%, #9aa0a6 80%, transparent 80%) 1; }
.newtab { width: 44px; }
.winbtns { margin-left: auto; display: flex; color: #8c8c8c; }
.winbtns button { width: 46px; }
.maximized .winbtns { height: 28px; }
.navbar { display: flex; align-items: center; height: 37px; padding-left: 6px; border-bottom: 1px solid #d5d8db; color: #5f6368; flex: none; }
.navbar > button { width: 32px; height: 32px; }
.navbar .off { color: #bdc1c6; }
.omni { display: flex; align-items: center; gap: 9px; flex: 1; height: 28px; margin-left: 7px; padding: 0 10px; border-radius: 14px; background: #f1f3f4; font-size: 14px; }
.omni b { font-weight: 400; color: #202124; }
.lockico { width: 12px; height: 14px; }
.star { margin-left: auto; }
.shield { margin-left: 46px; }
.navbar .vbar { height: 16px; margin: 0 13px 0 15px; background: #c4c8cc; }
.navbar .avatar { margin-right: 15px; }
.navbar .avatar + svg { margin-right: 14px; }
.page { padding: 0 8px; font: 16px/18px "Liberation Serif", serif; white-space: nowrap; }
.page h1 { margin: 21px 0; font-size: 32px; line-height: 37px; font-weight: 700; }
.page h2 { margin: 20px 0; font-size: 24px; line-height: 27px; font-weight: 700; }
.page p { margin: 16px 0; }
.page a { color: #0000ee; }

/* paint */
.paint { left: 140px; top: 176px; right: 260px; bottom: 8px; background: #f0f0f0; border: 1px solid #8a8f96; box-shadow: 0 0 10px #0006; color: #444; }
.paint-title { height: 30px; flex: none; background: #fff; display: flex; align-items: center; padding-left: 6px; color: #999; }
.paint-title .vbar { height: 14px; margin: 0 9px 0 7px; }
.save, .undo { margin-right: 6px; }
.qat { width: 8px; height: 8px; margin: 4px 3px 0 8px; }
.paint-title .qat + .vbar { margin: 0 7px; }
.paint-tabs { display: flex; height: 24px; flex: none; background: linear-gradient(#fff 23px, #dcdddf 23px); }
.paint-tabs .file { width: 56px; height: 23px; background: #1979ca; color: #fff; }
.paint-tabs .home { width: 58px; background: #f5f6f7; border: 1px solid #dcdddf; border-bottom: 0; }
.paint-tabs .view { width: 56px; }
.ribbon { display: flex; height: 91px; flex: none; background: #f5f6f7; border-bottom: 1px solid #d5dae2; padding: 2px 0; }
.group { display: flex; flex-direction: column; border-right: 1px solid #e0e2e5; padding: 2px 5px 0; }
.group h3 { margin-top: auto; text-align: center; color: #5a5a5a; height: 18px; }
.group-body { display: flex; gap: 5px; height: 66px; }
.g-clip { width: 106px; }
.g-image { width: 122px; padding-left: 4px; }
.g-tools { width: 81px; padding: 2px 0 0; }
.g-brush { width: 56px; align-items: center; }
.g-shapes { width: 242px; border: 0; padding-left: 5px; }
.big { flex-direction: column; width: 42px; justify-content: flex-start; padding-top: 4px; gap: 2px; color: #333; }
.paste-ico { width: 26px; height: 32px; }
.brush-ico { width: 32px; height: 32px; }
.smalls { display: flex; flex-direction: column; height: 66px; }
.smalls button { height: 22px; gap: 3px; justify-content: flex-start; color: #222; }
.smalls button.dim { color: #8f8f8f; }
.select-btn { width: 42px; flex-direction: column; border: 1px solid #62a2e4; background: #c9e0f7; align-items: stretch; justify-content: flex-start; }
.sel-top { height: 37px; padding: 6px 5px; border-bottom: 1px solid #62a2e4; }
.sel-top i { display: block; height: 24px; border: 1px dashed #1c5f9e; }
.sel-bot { display: flex; flex-direction: column; align-items: center; gap: 2px; flex: 1; }
.g-image .smalls .tri { margin-left: 2px; }
.tool-grid { display: grid; grid-template-columns: repeat(3, 23px); grid-auto-rows: 28px; justify-content: center; padding-top: 6px; }
.tool-grid svg { width: 16px; height: 16px; }
.letter { font: 700 19px/20px "Liberation Serif", serif; color: #1f3b63; }
.gallery { width: 142px; height: 62px; border: 1px solid #d0d5dc; margin-top: 2px; background: #fff; }
.gal-scroll { display: flex; flex-direction: column; width: 15px; height: 62px; margin: 2px 1px 0 -5px; border: 1px solid #d0d5dc; border-left: 0; }
.gal-scroll span { flex: 1; display: flex; align-items: center; justify-content: center; }
.gal-scroll .dim { color: #aaa; }
.gal-scroll .more svg { border-top: 1px solid #444; padding-top: 2px; height: 7px; width: 8px; }
.workspace { flex: 1; min-height: 0; background: linear-gradient(#c5cfe1, #dce6f2 60%); padding: 5px 0 0 4px; }
.canvas { position: relative; width: 1152px; height: 648px; background: #fff; box-shadow: 7px 7px 3px #8493b066; }
.handle { position: absolute; width: 5px; height: 5px; border: 1px solid #333; background: #fff; }
.hb { left: 574px; bottom: -5px; }
.hc { right: -5px; bottom: -5px; }
.paint-status { display: flex; height: 26px; flex: none; border-top: 1px solid #d4d4d4; color: #222; position: relative; }
.paint-status > span { width: 156px; border-right: 1px solid #d4d4d4; display: flex; align-items: center; gap: 4px; padding-left: 4px; margin: 1px 0; }
.paint-status > span:first-child { width: 155px; }
.paint-status .grow { flex: 1; width: auto; }
.zoomer { display: flex; align-items: center; width: 217px; padding-left: 20px; gap: 5px; }
.zoomer input { width: 85px; height: 16px; margin: 0 4px; appearance: none; background: linear-gradient(#0000 6px, #ccc 6px, #e6e6e6 10px, #0000 10px); }
.zoomer input::-webkit-slider-thumb { appearance: none; width: 9px; height: 16px; background: #0078d7; clip-path: polygon(0 0, 100% 0, 100% 75%, 50% 100%, 0 75%); }
.grip { position: absolute; right: 2px; bottom: 2px; width: 10px; height: 10px; }

/* filezilla */
.filezilla { left: 700px; top: 3px; right: 35px; bottom: 96px; background: #f0f0f0; border: 1px solid #8a8f96; border-top: 0; box-shadow: 0 2px 12px #0008; }
.fz-title { height: 32px; flex: none; background: #fff; display: flex; align-items: center; gap: 5px; padding-left: 7px; color: #999; }
.fz-title .winbtns { align-self: stretch; }
.fz-menu { height: 16px; flex: none; background: #fff; display: flex; gap: 13px; padding-left: 6px; color: #6d6d6d; }
.fz-tools { height: 30px; flex: none; display: flex; align-items: center; border-bottom: 1px solid #a0a0a0; padding-left: 2px; }
.fz-tools button { width: 27px; height: 25px; }
.fz-tools button svg { width: 20px; height: 20px; }
.fz-tools .narrow { width: 14px; }
.fz-tools .narrow svg { width: 8px; height: 4px; }
.fz-tools .on { background: #bcdcf4; border: 1px solid #8ec5f0; }
.fz-tools .vbar { height: 22px; margin: 0 4px 0 2px; }
.quick { display: grid; grid-template-columns: 37px 110px 73px 110px 70px 110px 42px 47px 107px 19px; align-items: center; height: 35px; flex: none; }
.quick label { justify-self: end; padding-right: 6px; }
.quick input { height: 23px; border: 1px solid #7a7a7a; background: #fff; min-width: 0; }
.quick button { height: 24px; background: #e1e1e1; border: 1px solid #adadad; }
.quick .go { border: 2px solid #0078d7; margin: 0 2px 0 12px; }
.quick .drop svg { width: 9px; height: 5px; color: #444; }
.log { display: flex; height: 95px; flex: none; margin: 0 2px 0 1px; border: 2px solid #696969; border-width: 2px 0 0 1px; background: #fff; justify-content: space-between; }
.log table { height: 90px; }
.log tr { height: 15px; line-height: 15px; }
.log th { width: 73px; }
.sb { width: 15px; background: #f0f0f0; display: flex; flex-direction: column; align-items: center; padding: 6px 0; color: #505050; }
.sb.end { margin-left: auto; }
.sb svg { width: 9px; height: 6px; }
.track { flex: 1; width: 100%; padding: 4px 0; }
.track i { display: block; background: #cdcdcd; }
.t-log { padding-top: 24px; }
.t-log i { height: 40px; }
.t-tree i { height: 114px; }
.t-list i { height: 160px; }
.panes { display: flex; margin: 7px 2px 0 1px; }
.panes section { flex: 1; display: flex; flex-direction: column; min-width: 0; }
.trees { height: 225px; flex: none; }
.sitebar { display: flex; height: 24px; border: 1px solid #696969; border-top-width: 2px; background: #fff; align-items: stretch; }
.sitebar label { width: 62px; background: #f0f0f0; padding: 3px 0 0 4px; border-right: 1px solid #696969; }
.sitebar input { flex: 1; }
.combo { align-items: center; padding-right: 3px; }
.cdrop { width: 9px; height: 6px; color: #444; }
.treebody { flex: 1; display: flex; background: #fff; border: 1px solid #696969; border-width: 0 0 0 1px; border-bottom-color: #e3e3e3; }
.dots { width: 1px; margin-left: 49px; background: repeating-linear-gradient(#808080 0 1px, #fff 1px 2px); }
.lists { flex: 1; min-height: 0; margin-top: 6px; }
.listbody { flex: 1; display: flex; min-height: 0; overflow: hidden; background: #fff; border-top: 1px solid #696969; border-left: 1px solid #696969; position: relative; justify-content: space-between; }
.files { align-self: flex-start; margin-left: 6px; }
.files tr { height: 19px; line-height: 19px; }
.files thead tr { height: 25px; }
.files td svg { width: 13px; height: 16px; display: inline-block; vertical-align: middle; margin-right: 3px; }
.owner { margin-left: auto; margin-right: 74px; width: 73px; }
.owner thead tr { border-right: 1px solid #e0e0e0; }
.sortcaret { position: absolute; left: 56px; top: 1px; width: 9px; height: 5px; color: #555; }
.liststat { height: 23px; line-height: 23px; padding-left: 3px; border-top: 1px solid #d8d8d8; white-space: nowrap; }
.queue { height: 105px; flex: none; margin-top: 6px; background: #fff; border: 1px solid #828790; padding: 5px 7px; }
.qtabs { display: flex; height: 26px; flex: none; margin-top: 3px; padding-left: 5px; background: linear-gradient(#c4c4c4, #f0f0f0); border-top: 1px solid #999; border-bottom: 1px solid #d8d8d8; align-items: flex-start; }
.qtabs button { height: 20px; border: 1px solid #999; border-top: 0; border-radius: 0 0 3px 3px; background: linear-gradient(#eaeaea 50%, #dadada 50%); width: 101px; }
.qtabs .cur { width: 86px; background: #fff; font-weight: 700; }
.qtabs button:last-child { width: 127px; }
.fz-status { display: flex; align-items: center; justify-content: flex-end; height: 22px; flex: none; gap: 1px; padding-right: 21px; position: relative; }
.fz-status span { margin: 0 40px 0 5px; }
.fz-status .vbar { height: 19px; background: #d0d0d0; margin-right: 8px; }
.led { width: 11px; height: 11px; margin-left: 3px; }

/* windows site manager */
.dialog { left: 768px; top: 189px; right: 205px; bottom: 222px; background: #f0f0f0; border: 1px solid #a3a3a3; box-shadow: 3px 5px 16px #0007; }
.dlg-title { display: flex; justify-content: space-between; align-items: center; height: 30px; flex: none; padding: 0 8px; background: #fff; }
.dlg-body { flex: 1; min-height: 0; display: flex; gap: 7px; padding: 6px 1px 7px 0; border-bottom: 1px solid #a0a0a0; margin: 0 6px; }
.dlg-left { width: 467px; display: flex; flex-direction: column; }
.dlg-left h2 { margin-bottom: 6px; }
.tree { flex: 1; background: #fff; border: 1px solid #828790; padding: 2px 0 0 8px; line-height: 18px; }
.tree li { display: flex; align-items: center; height: 18px; }
.expander { width: 18px; height: 10px; }
.fold { width: 16px; height: 14px; margin-right: 3px; }
.child { padding-left: 24px; }
.branch { width: 12px; height: 18px; }
.srv { width: 10px; height: 17px; margin: 0 4px 0 2px; }
.tree span { background: #f0f0f0; padding: 0 2px; }
.btngrid { display: grid; grid-template-columns: 100px 100px; gap: 8px; justify-content: center; padding-top: 7px; }
.btngrid button, .dlg-foot button, .dir button { height: 24px; background: #e1e1e1; border: 1px solid #adadad; }
.dlg-right { flex: 1; display: flex; flex-direction: column; min-width: 0; }
.dlg-tabs { display: flex; align-items: flex-end; height: 23px; padding-left: 1px; position: relative; margin-bottom: -1px; font-size: 11px; }
.dlg-tabs button { height: 21px; border: 1px solid #d9d9d9; border-left-width: 0; }
.dlg-tabs .t1 { width: 50px; border-left-width: 1px; }
.dlg-tabs .t2 { width: 68px; }
.dlg-tabs .t3 { width: 96px; }
.dlg-tabs .t4 { width: 51px; }
.dlg-tabs .cur { height: 23px; background: #fff; border-bottom-color: #fff; }
.dlg-panel { flex: 1; background: #fff; border: 1px solid #dcdcdc; padding: 7px 8px; }
.row { display: flex; align-items: center; gap: 8px; }
.dlg-panel > label, .dlg-panel > .lbl { display: flex; align-items: center; }
.row > label[for="st"] { width: 67px; }
.row > label[for="st"] + .selwrap { margin-left: -8px; }
.selwrap { display: grid; width: 209px; }
.selwrap > * { grid-area: 1 / 1; }
.selwrap select { appearance: none; height: 23px; background: #e1e1e1; border: 1px solid #adadad; padding-left: 3px; }
.selwrap svg { width: 9px; height: 6px; justify-self: end; align-self: center; margin-right: 5px; color: #444; }
.check { gap: 3px; height: 21px; }
.check input { appearance: none; width: 13px; height: 13px; border: 1px solid #333; background: #fff; }
.check.first { margin: 9px 0 2px; }
.dlg-panel hr { margin: 0; border: 0; border-top: 1px solid #a0a0a0; }
.lbl { margin: 8px 0 6px; height: 16px; }
.dlg-panel input[type="text"] { height: 23px; border: 1px solid #7a7a7a; background: #fff; padding: 0 5px; min-width: 0; }
.dir input { flex: 1; }
.dlg-panel .dir input { height: 26px; padding-bottom: 4px; }
.dir button { width: 86px; }
.lbl.second { margin: 12px 0 6px; }
.full { width: 100%; }
.sync { margin-top: 9px; }
.cmp { margin-bottom: 2px; }
.spin { gap: 0; }
.dlg-panel .spin input { width: 31px; text-align: right; }
.spin label { width: 41px; margin-left: 7px; }
.spin label:last-child { width: auto; }
.updown { width: 15px; margin-left: 2px; display: flex; flex-direction: column; gap: 1px; }
.updown i { height: 11px; border: 1px solid #adadad; background: #f0f0f0; display: flex; align-items: center; justify-content: center; }
.updown svg { width: 6px; height: 3px; }
.dlg-foot { display: flex; justify-content: flex-end; gap: 8px; height: 39px; flex: none; padding: 8px 6px 0 0; }
.dlg-foot button { width: 86px; }

/* taskbar */
.taskbar { display: flex; height: 40px; flex: none; background: #1a2634; color: #fff; }
.start { width: 48px; }
.searchbox { display: flex; align-items: center; gap: 12px; width: 344px; padding-left: 12px; background: #f2f2f2; border: 1px solid #cfcfcf; color: #333; }
.searchbox + .app { margin-right: 1px; }
.searchbox input { flex: 1; min-width: 0; font-size: 14px; }
.searchbox input::placeholder { color: #444; opacity: 1; }
.app { width: 49px; border-bottom: 2px solid transparent; padding-top: 2px; }
.app svg { width: 24px; height: 24px; }
.app .i18 { width: 18px; height: 18px; }
.app .i16 { width: 14px; height: 14px; }
.app.run { background: linear-gradient(#76b9ed, #76b9ed) center bottom / 40px 2px no-repeat; border-bottom: 0; padding: 0; }
.app.run.cur { background: linear-gradient(#76b9ed, #76b9ed) center bottom / 49px 2px no-repeat, #47525e; }
.tray { margin-left: auto; display: flex; align-items: center; gap: 15px; padding-right: 19px; }
.tchev { width: 12px; height: 7px; margin-right: 2px; }
.tray time { text-align: center; line-height: 18px; margin-left: 3px; }
.notif { width: 24px; height: 24px; }
.tray.slim { padding-right: 9px; }

/* image viewer with the mac dialog */
.viewer { flex: 1; min-height: 0; display: flex; justify-content: center; background: #0e0e0e; }
.mac { width: 1334px; background: #ebebeb; font: 23px/30px Inter, "Open Sans", sans-serif; display: flex; flex-direction: column; }
.mac-title { display: grid; grid-template-columns: 1fr auto 1fr; align-items: center; height: 43px; flex: none; border-bottom: 1px solid #a9a9a9; border-top: 1px solid #b9b9b9; background: linear-gradient(#e4e4e4, #cdcdcd); color: #4a4a4a; }
.lights { display: flex; gap: 14px; padding-left: 13px; }
.lights i { width: 23px; height: 23px; border-radius: 50%; }
.red { background: #fc605b; border: 1px solid #e2463f; }
.grey { background: #d0d0d0; border: 1px solid #b5b5b5; }
.green { background: #28ca41; border: 1px solid #1eae2f; }
.mac-body { flex: 1; min-height: 0; display: flex; gap: 36px; margin: 0 11px; padding-right: 21px; }
.mac-left { width: 435px; display: flex; flex-direction: column; }
.mac-left h3 { margin: 14px 0 11px 2px; }
.mac-tree { flex: 1; background: #fff; border: 2px solid #c5c5c5; padding: 8px 0 0 25px; }
.mac-tree li { display: flex; align-items: center; height: 39px; padding-left: 74px; }
.mac-tree .root { padding: 0; height: 36px; }
.mtri { width: 16px; height: 14px; }
.mfold { width: 28px; height: 24px; margin: 0 10px 0 21px; }
.msrv { width: 16px; height: 30px; margin-right: 5px; }
.mac-tree span { padding: 5px 7px; }
.mac-tree .cur { background: #dadada; color: #fff; }
.mac button { height: 37px; padding-top: 2px; border-radius: 7px; background: #fff; border: 1px solid #c8c8c8; border-bottom: 2px solid #b3b3b3; color: #2a2a2a; }
.mac-grid { display: grid; grid-template-columns: 199px 199px; gap: 13px; justify-content: center; padding-top: 14px; }
.mac-right { flex: 1; min-width: 0; display: flex; flex-direction: column; padding: 37px 0 17px; }
.mac-tabs { display: flex; align-self: center; position: relative; margin-bottom: -20px; }
.mac-tabs button { border-radius: 0; border-left-width: 0; }
.mac-tabs .m1 { width: 132px; border-radius: 7px 0 0 7px; border-left-width: 1px; }
.mac-tabs .m2 { width: 152px; }
.mac-tabs .m3 { width: 236px; }
.mac-tabs .m4 { width: 132px; border-radius: 0 7px 7px 0; }
.mac .mac-tabs .cur, .mac .primary { background: linear-gradient(#6ba5fd, #0366ff); color: #fff; border-color: #2f7dfb; border-width: 1px 0; }
.mac-panel { flex: 1; background: #e2e2e2; border: 1px solid #d8d8d8; border-radius: 7px; padding: 41px 17px 0; color: #111; }
.mrow { display: flex; align-items: center; }
.mrow.type label { width: 172px; padding: 2px 0 0 3px; }
.msel { display: grid; width: 484px; }
.msel > * { grid-area: 1 / 1; }
.msel select { appearance: none; height: 37px; padding: 2px 0 0 15px; background: #fff; border: 1px solid #c8c8c8; border-bottom: 2px solid #b3b3b3; border-radius: 7px; color: #2a2a2a; }
.knob { justify-self: end; width: 31px; background: linear-gradient(#6ba5fd, #0366ff); border-radius: 0 7px 7px 0; color: #fff; display: flex; flex-direction: column; align-items: center; justify-content: center; gap: 6px; }
.knob svg { width: 14px; height: 8px; }
.mcheck { display: flex; align-items: center; gap: 9px; height: 30px; padding-left: 4px; color: #333; font-size: 24px; }
.mcheck input { appearance: none; width: 25px; height: 25px; background: #fff; border: 1px solid #c2c2c2; border-radius: 6px; }
.c1 { margin: 26px 0 23px; }
.mac-panel hr { margin: 0 4px; border: 0; border-top: 4px solid #dadada; }
.mlbl { display: block; margin: 26px 0 10px 3px; font-size: 24px; }
.mac-panel input[type="text"] { height: 39px; background: #fff; border: 2px solid #c4c4c4; padding: 3px 0 0 5px; min-width: 0; font-size: 24px; }
.mdir input { flex: 1; margin-right: 15px; }
.mdir button { width: 153px; }
.mfull { width: 100%; display: block; }
.c2 { margin: 16px 0 14px; }
.c3 { margin-bottom: 23px; }
.mac-panel .mspin input { width: 70px; text-align: right; padding-right: 6px; }
.stepper { width: 21px; height: 37px; margin: 0 20px 0 8px; border: 1px solid #c8c8c8; border-radius: 11px; background: #fff; display: flex; flex-direction: column; align-items: center; justify-content: center; gap: 9px; color: #444; }
.stepper svg { width: 11px; height: 7px; }
.mspin label:not(:last-child) { width: 101px; }
.mac-foot { display: flex; justify-content: flex-end; gap: 25px; height: 82px; flex: none; margin: 24px 12px 0; padding: 23px 5px 0 0; border-top: 4px solid #e0e0e0; }
.mac-foot button { width: 154px; }
```
